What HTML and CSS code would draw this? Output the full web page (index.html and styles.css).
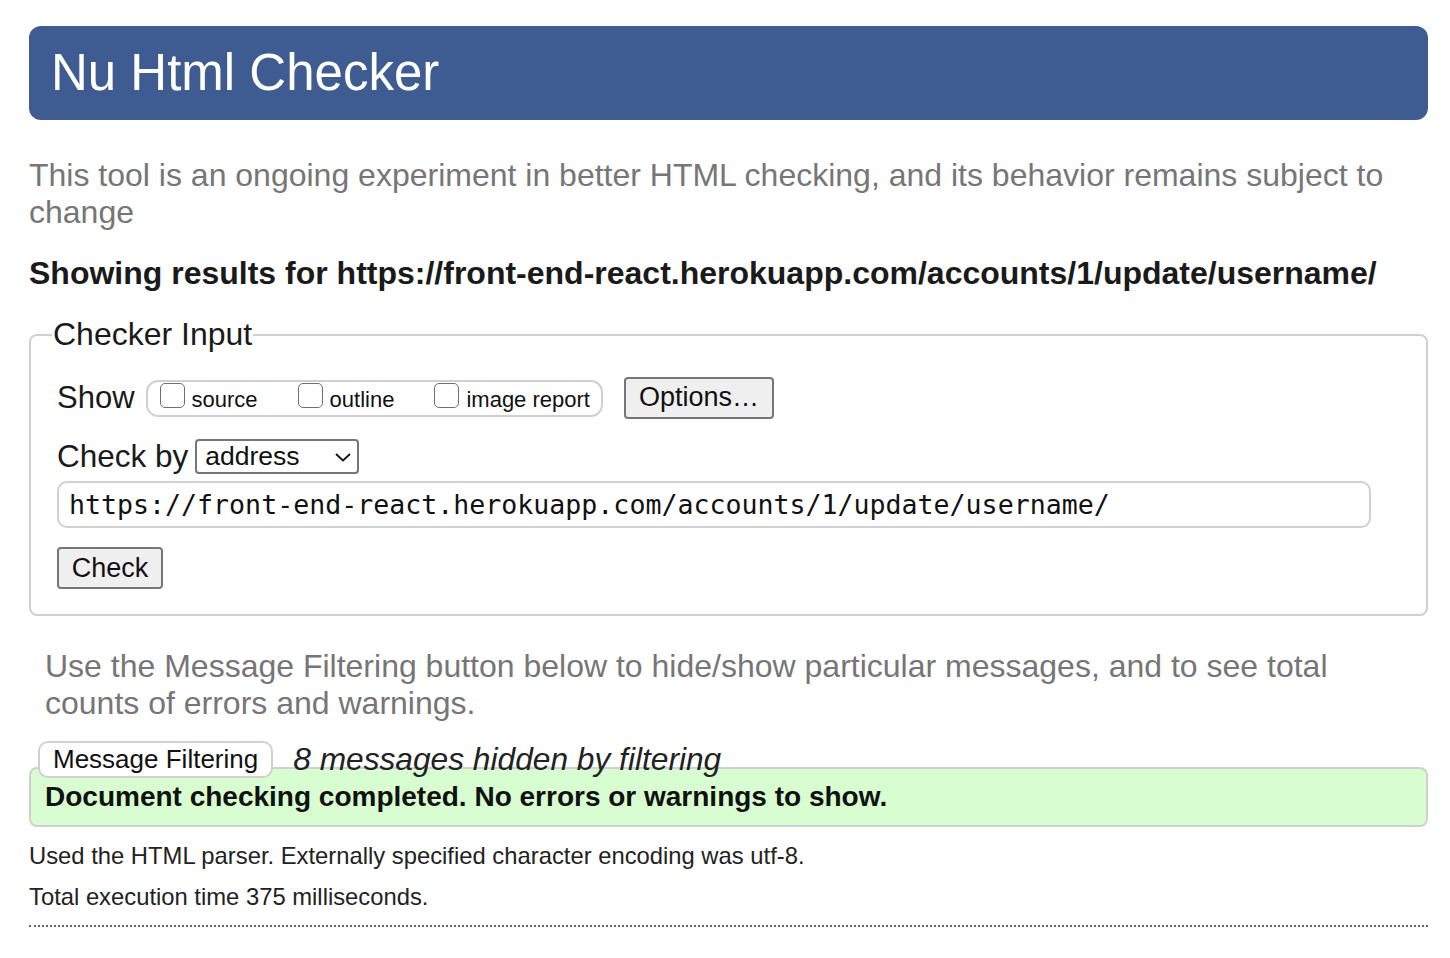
FILE: index.html
```html
<!DOCTYPE html>
<html lang="en">
<head>
<meta charset="utf-8">
<title>Nu Html Checker</title>
<link rel="stylesheet" href="styles.css">
</head>
<body>
<header class="masthead"><h1 class="title">Nu Html Checker</h1></header>
<p class="intro">This tool is an ongoing experiment in better HTML checking, and its behavior remains subject to change</p>
<p class="results">Showing results for https://front-end-react.herokuapp.com/accounts/1/update/username/</p>
<fieldset class="checker">
  <legend class="legend">Checker Input</legend>
  <div class="row show-row">
    <span class="label">Show</span>
    <span class="show-group">
      <label class="opt"><span class="box"></span>source</label>
      <label class="opt"><span class="box"></span>outline</label>
      <label class="opt"><span class="box"></span>image report</label>
    </span>
    <span class="btn options">Options…</span>
  </div>
  <div class="row by-row">
    <span class="label">Check by</span>
    <span class="select">address
      <svg class="chev" width="18" height="12" viewBox="0 0 18 12"><path d="M2 3 L9 9.5 L16 3" fill="none" stroke="#111" stroke-width="1.8"/></svg>
    </span>
  </div>
  <div class="url">https://front-end-react.herokuapp.com/accounts/1/update/username/</div>
  <div class="row"><span class="btn check">Check</span></div>
</fieldset>
<p class="filter-note">Use the Message Filtering button below to hide/show particular messages, and to see total counts of errors and warnings.</p>
<div class="filter-row">
  <span class="filter-btn">Message Filtering</span>
  <span class="hidden-note">8 messages hidden by filtering</span>
</div>
<div class="success">Document checking completed. No errors or warnings to show.</div>
<p class="meta">Used the HTML parser. Externally specified character encoding was utf-8.</p>
<p class="meta">Total execution time 375 milliseconds.</p>
<hr class="rule">
</body>
</html>
```

FILE: styles.css
```css
html, body {
  background: #fff;
}
body {
  margin: 26px 22px 0 29px;
  font-family: "Liberation Sans", Arial, Helvetica, sans-serif;
  color: #111;
}
.masthead {
  background: #3e5c92;
  border-radius: 12px;
  height: 94px;
  display: flex;
  align-items: center;
  padding-left: 22px;
}
.title {
  margin: 0;
  color: #fff;
  font-weight: normal;
  font-size: 51px;
  line-height: 1;
  padding-bottom: 2px;
}
.intro {
  margin: 37px 0 0 0;
  font-size: 32px;
  line-height: 37px;
  color: #767676;
}
.results {
  margin: 24px 0 0 0;
  font-size: 32px;
  line-height: 37px;
  font-weight: bold;
  color: #1a1a1a;
}
.checker {
  margin: 24px 0 0 0;
  border: 2px solid #d0d0d0;
  border-radius: 8px;
  padding: 24px 26px 25px 26px;
  min-width: 0;
}
.legend {
  font-size: 32px;
  line-height: 37px;
  padding: 0 1px;
  margin-left: -5px;
  color: #1a1a1a;
}
.row {
  display: flex;
  align-items: center;
}
.label {
  font-size: 31px;
  color: #1a1a1a;
}
.by-row .label {
  font-size: 31.5px;
}
.show-row {
  height: 42px;
}
.show-group {
  margin-left: 11px;
  height: 37px;
  box-sizing: border-box;
  border: 2px solid #d0d0d0;
  border-radius: 12px;
  display: flex;
  align-items: center;
  padding: 0 11px 0 12px;
  gap: 40px;
}
.opt {
  display: flex;
  align-items: center;
  font-size: 22px;
  color: #111;
  padding-top: 3px;
}
.box {
  width: 25px;
  height: 25px;
  box-sizing: border-box;
  border: 1.5px solid #707070;
  border-radius: 5px;
  margin-right: 7px;
  margin-top: -9px;
  background: #fff;
}
.btn {
  display: inline-flex;
  align-items: center;
  justify-content: center;
  box-sizing: border-box;
  background: #efefef;
  border: 2px solid #767676;
  border-radius: 4px;
  font-size: 27px;
  color: #111;
}
.options {
  margin-left: 21px;
  width: 150px;
  height: 42px;
  padding-bottom: 2px;
}
.by-row {
  margin-top: 20px;
  height: 35px;
}
.select {
  margin-left: 7px;
  width: 164px;
  height: 35px;
  box-sizing: border-box;
  border: 2px solid #767676;
  border-radius: 4px;
  display: flex;
  align-items: center;
  justify-content: space-between;
  padding: 0 5px 0 8px;
  font-size: 26.5px;
  color: #111;
}
.chev {
  display: block;
}
.url {
  margin-top: 7px;
  height: 47px;
  box-sizing: border-box;
  border: 2px solid #d0d0d0;
  border-radius: 10px;
  display: flex;
  align-items: center;
  padding-left: 10px;
  margin-right: 29px;
  font-family: "DejaVu Sans Mono", Menlo, monospace;
  font-size: 26.6px;
  color: #111;
}
.check {
  margin-top: 19px;
  width: 106px;
  height: 42px;
}
.filter-note {
  margin: 32px 0 0 16px;
  font-size: 32px;
  line-height: 37px;
  color: #767676;
}
.filter-row {
  margin: 19px 0 0 9px;
  height: 37px;
  display: flex;
  align-items: center;
}
.filter-btn {
  position: relative;
  z-index: 1;
  box-sizing: border-box;
  height: 37px;
  padding: 0 13px;
  display: flex;
  align-items: center;
  background: #fff;
  border: 2px solid #d0d0d0;
  border-radius: 10px;
  font-size: 26px;
  color: #111;
}
.hidden-note {
  margin-left: 20px;
  font-style: italic;
  font-size: 31.7px;
  color: #222;
}
.success {
  margin-top: -11px;
  height: 60px;
  box-sizing: border-box;
  background: #d7fdd0;
  border: 2px solid #d0d0d0;
  border-radius: 8px;
  padding: 12px 0 0 14px;
  font-size: 28px;
  font-weight: bold;
  line-height: 32px;
  color: #111;
}
.meta {
  margin: 16px 0 0 0;
  font-size: 23.8px;
  line-height: 26px;
  color: #222;
}
.meta + .meta {
  margin-top: 15px;
}
.rule {
  margin: 15px 0 0 0;
  border: 0;
  border-top: 2px dotted #666;
  height: 0;
}
```
